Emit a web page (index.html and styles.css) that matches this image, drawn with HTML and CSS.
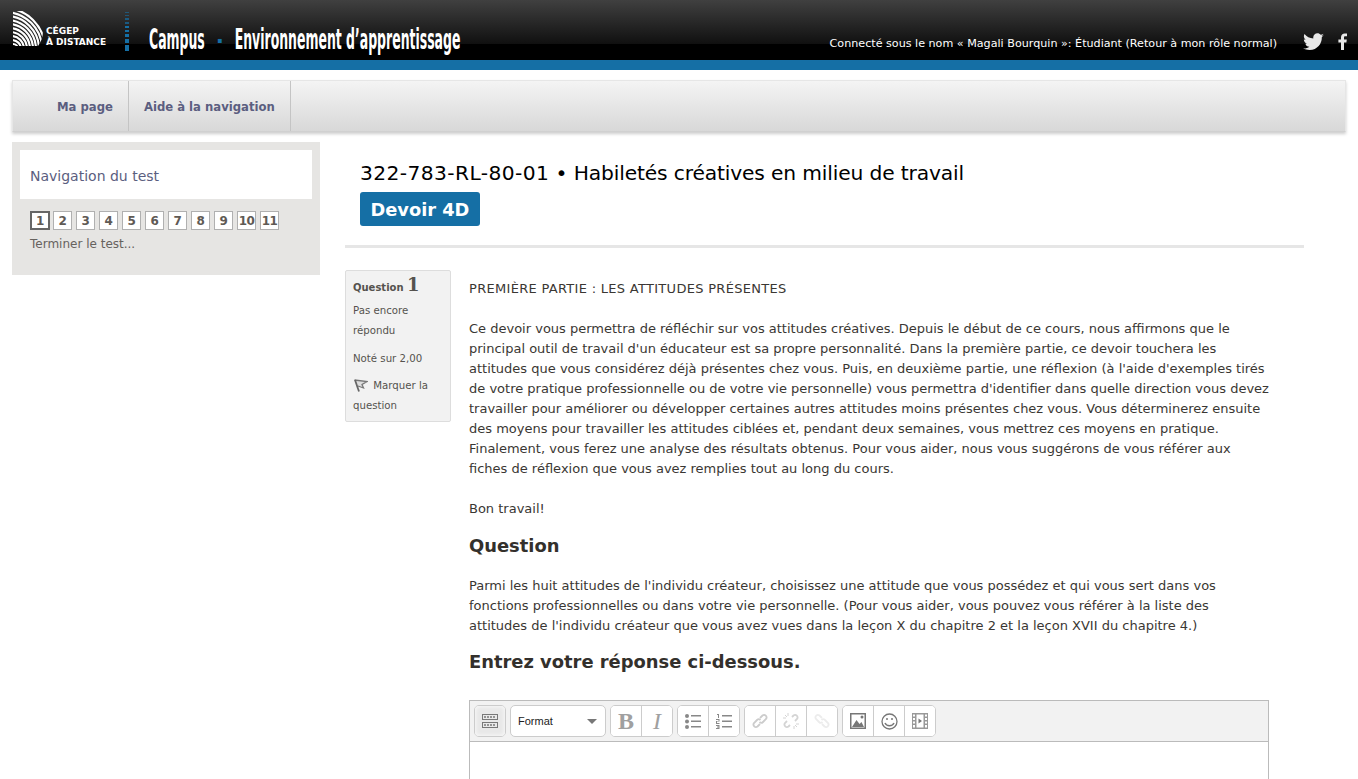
FILE: index.html
```html
<!DOCTYPE html>
<html lang="fr">
<head>
  <meta charset="UTF-8">
  <title>Devoir 4D</title>
  <link rel="stylesheet" href="styles.css">
</head>
<body>

  <header class="site-header">
    <div class="logo">
      <svg class="logo-mark" width="32" height="36" viewBox="0 0 32 36">
        <defs>
          <clipPath id="logo-clip"><path d="M1 0H16C26 3 31 11 31 20C31 26 29 31 26 35H1Z"/></clipPath>
        </defs>
        <g clip-path="url(#logo-clip)" fill="none" stroke="#fff" stroke-width="2.200">
          <circle cx="1" cy="38" r="5"/>
          <circle cx="0" cy="38" r="9"/>
          <circle cx="-1" cy="38" r="13"/>
          <circle cx="-2" cy="38" r="17"/>
          <circle cx="-3" cy="38" r="21"/>
          <circle cx="-4" cy="38" r="25"/>
          <circle cx="-5" cy="38" r="29"/>
          <circle cx="-6" cy="38" r="33"/>
          <circle cx="-7" cy="38" r="37"/>
          <circle cx="-8" cy="38" r="41"/>
        </g>
      </svg>
      <div class="logo-text">CÉGEP<br>À DISTANCE</div>
    </div>
    <div class="dots">
      <i class="d1"></i><i class="d1"></i><i class="d2"></i><i class="d2"></i><i class="d3"></i><i class="d3"></i><i class="d4"></i><i class="d5"></i><i class="d6"></i>
    </div>
    <div class="site-title">
      <span>Campus</span><span class="dash">-</span><span>Environnement d’apprentissage</span>
    </div>
    <div class="user-info">Connecté sous le nom « Magali Bourquin »: Étudiant (Retour à mon rôle normal)</div>
    <svg class="twitter" width="21" height="18" viewBox="0 0 24 20">
      <path fill="#e8e8e8" d="M24 2.4c-.9.4-1.8.7-2.8.8 1-.6 1.8-1.6 2.2-2.7-1 .6-2 1-3.1 1.2C19.300.7 18 0 16.600 0c-2.700 0-4.900 2.200-4.900 4.900 0 .4 0 .8.1 1.100C7.700 5.800 4.100 3.900 1.700.9c-.4.7-.7 1.600-.7 2.500 0 1.700.9 3.200 2.200 4.100-.8 0-1.600-.2-2.200-.6v.1c0 2.400 1.700 4.400 3.900 4.800-.4.100-.8.200-1.300.2-.3 0-.6 0-.9-.1.6 2 2.400 3.400 4.600 3.400-1.700 1.300-3.800 2.100-6.100 2.100-.4 0-.8 0-1.200-.1C2.200 18.200 4.800 19 7.500 19c9.100 0 14-7.500 14-14v-.6c1-.7 1.800-1.600 2.500-2Z"/>
    </svg>
    <svg class="facebook" width="9" height="17" viewBox="0 0 9 17">
      <path fill="#e8e8e8" d="M6 17V9.500h2.400L8.800 6.500H6V4.700c0-.9.300-1.400 1.400-1.400H9V.6C8.700.6 7.800.5 6.800.5 4.600.5 3 1.800 3 4.300v2.200H.4v3H3V17Z"/>
    </svg>
  </header>
  <div class="blue-bar"></div>

  <nav class="main-nav">
    <a class="first" href="#">Ma page</a>
    <a href="#">Aide à la navigation</a>
  </nav>

  <div class="page">
    <aside class="test-nav">
      <div class="test-nav-title">Navigation du test</div>
      <div class="pages">
        <span class="current">1</span><span>2</span><span>3</span><span>4</span><span>5</span><span>6</span><span>7</span><span>8</span><span>9</span><span>10</span><span>11</span>
      </div>
      <a class="finish" href="#">Terminer le test...</a>
    </aside>

    <main class="content">
      <div class="page-head">
        <h1><span class="course-code">322-783-RL-80-01</span> • Habiletés créatives en milieu de travail</h1>
        <div class="badge">Devoir 4D</div>
      </div>

      <div class="question">
        <div class="q-info">
          <div class="q-no">Question <b>1</b></div>
          <p>Pas encore répondu</p>
          <p>Noté sur 2,00</p>
          <p>
            <svg class="flag" width="15" height="14" viewBox="0 0 15 14">
              <path d="M1.500 2L14 3.500 9 6.500 10.500 10 5 8" fill="#ddd" stroke="#777" stroke-width="1.300"/>
              <path d="M2 2L6 13.500" fill="none" stroke="#666" stroke-width="1.800"/>
            </svg>
            Marquer la question
          </p>
        </div>

        <div class="q-body">
          <p class="caps">PREMIÈRE PARTIE : LES ATTITUDES PRÉSENTES</p>
          <br>
          <p>Ce devoir vous permettra de réfléchir sur vos attitudes créatives. Depuis le début de ce cours, nous affirmons que le principal outil de travail d'un éducateur est sa propre personnalité. Dans la première partie, ce devoir touchera les attitudes que vous considérez déjà présentes chez vous. Puis, en deuxième partie, une réflexion (à l'aide d'exemples tirés de votre pratique professionnelle ou de votre vie personnelle) vous permettra d'identifier dans quelle direction vous devez travailler pour améliorer ou développer certaines autres attitudes moins présentes chez vous. Vous déterminerez ensuite des moyens pour travailler les attitudes ciblées et, pendant deux semaines, vous mettrez ces moyens en pratique. Finalement, vous ferez une analyse des résultats obtenus. Pour vous aider, nous vous suggérons de vous référer aux fiches de réflexion que vous avez remplies tout au long du cours.</p>
          <br>
          <p>Bon travail!</p>
          <h3>Question</h3>
          <p>Parmi les huit attitudes de l'individu créateur, choisissez une attitude que vous possédez et qui vous sert dans vos fonctions professionnelles ou dans votre vie personnelle. (Pour vous aider, vous pouvez vous référer à la liste des attitudes de l'individu créateur que vous avez vues dans la leçon X du chapitre 2 et la leçon XVII du chapitre 4.)</p>
          <h3 class="answer-title">Entrez votre réponse ci-dessous.</h3>

          <div class="editor">
            <div class="toolbar">
              <div class="group"><button class="pressed">
                <svg width="16" height="14" viewBox="0 0 16 14" fill="none" stroke="#777"><rect x=".5" y=".5" width="15" height="5"/><rect x=".5" y="8.500" width="15" height="5"/><path d="M2 3h12M2 11h12" stroke-dasharray="2 1" stroke-width="1.500"/></svg>
              </button></div>
              <div class="group select"><span>Format</span><i class="caret"></i></div>
              <div class="group">
                <button class="letter bold">B</button>
                <button class="letter italic">I</button>
              </div>
              <div class="group">
                <button><svg width="16" height="15" viewBox="0 0 16 15" fill="#888"><circle cx="2" cy="2" r="2"/><circle cx="2" cy="7.500" r="2"/><circle cx="2" cy="13" r="2"/><rect x="6" y="1" width="10" height="1.500"/><rect x="6" y="6.500" width="10" height="1.500"/><rect x="6" y="12" width="10" height="1.500"/></svg></button>
                <button><svg width="16" height="15" viewBox="0 0 16 15" fill="#888"><path d="M1 0h2v4H2V1H1ZM0 5h3.500v2.500H1V9h2.500v1H0V7h2.500V6H0ZM0 11h3.500v4H0v-1h2.500v-.5H1v-1h1.500V12H0Z"/><rect x="6" y="1" width="10" height="1.500"/><rect x="6" y="6.500" width="10" height="1.500"/><rect x="6" y="12" width="10" height="1.500"/></svg></button>
              </div>
              <div class="group">
                <button><svg width="16" height="16" viewBox="0 0 16 16" fill="none" stroke="#ccc" stroke-width="1.800"><path d="M8 5l2.500-2.500a2.500 2.500 0 0 1 3.500 3.500L11 9a2.500 2.500 0 0 1-3.500 0"/><path d="M8 11l-2.500 2.500A2.500 2.500 0 0 1 2 10L5 7a2.500 2.500 0 0 1 3.500 0"/></svg></button>
                <button><svg width="16" height="16" viewBox="0 0 16 16" fill="none" stroke="#d4d4d4" stroke-width="1.800"><path d="M9 4l1.500-1.500A2.500 2.500 0 0 1 14 6l-2 2"/><path d="M7 12l-1.500 1.500A2.500 2.500 0 0 1 2 10l2-2"/><path stroke-width="1" d="M5 0v3M0 5h3M2 2l2 2M11 13v3M13 11h3M12 12l2 2"/></svg></button>
                <button><svg width="16" height="16" viewBox="0 0 16 16" fill="none" stroke="#ececec" stroke-width="1.800"><path d="M8 11l2.500 2.500A2.500 2.500 0 0 0 14 10l-3-3a2.500 2.500 0 0 0-3.500 0"/><path d="M8 5L5.500 2.500A2.500 2.500 0 0 0 2 6l3 3a2.500 2.500 0 0 0 3.500 0"/></svg></button>
              </div>
              <div class="group">
                <button><svg width="16" height="16" viewBox="0 0 16 16"><rect x=".75" y=".75" width="14.500" height="14.500" fill="none" stroke="#777" stroke-width="1.500"/><path d="M2 14l4.500-7 3 4 2-2 2.500 5Z" fill="#777"/><circle cx="12" cy="4" r="1.500" fill="#777"/></svg></button>
                <button><svg width="17" height="17" viewBox="0 0 17 17" fill="none" stroke="#777" stroke-width="1.300"><circle cx="8.500" cy="8.500" r="7.500"/><path d="M4 10c1.500 3.500 7.500 3.500 9 0" stroke-width="1.500"/><circle cx="6" cy="6" r="1" fill="#777" stroke="none"/><circle cx="11" cy="6" r="1" fill="#777" stroke="none"/></svg></button>
                <button><svg width="16" height="16" viewBox="0 0 16 16" fill="#999"><path d="M0 0h16v16H0ZM1 1.500v2h2v-2ZM1 5v2h2V5ZM1 8.500v2h2v-2ZM1 12v2.500h2V12ZM13 1.500v2h2v-2ZM13 5v2h2V5ZM13 8.500v2h2v-2ZM13 12v2.500h2V12ZM4.500 1.500v13h7v-13Z" fill-rule="evenodd"/><path d="M6.500 5.500l3.500 2.500-3.500 2.500Z" fill="#777"/></svg></button>
              </div>
            </div>
            <div class="editor-area"></div>
          </div>
        </div>
      </div>
    </main>
  </div>

</body>
</html>
```

FILE: styles.css
```css
:root {
  --blue: #156fa5;
  --text: #3a3733;
  --nav-text: #5b5e80;
}

html, body {
  height: 100%;
  overflow: hidden;
}

body {
  margin: 0;
  background: #fff;
  color: var(--text);
  font-family: "DejaVu Sans", Verdana, sans-serif;
  font-size: 13px;
  line-height: 20px;
}

p {
  margin: 0;
}

/* Header */
.site-header {
  display: flex;
  align-items: flex-start;
  height: 60px;
  background: linear-gradient(#404040 0, #101010 44px, #000 44px);
  color: #fff;
}

.logo {
  display: flex;
  align-items: flex-end;
  margin: 11px 0 0 12px;
  width: 113px;
}

.logo-mark {
  flex: none;
}

.logo-text {
  margin: 0 0 -1px 2px;
  font-size: 9px;
  line-height: 11px;
  font-weight: bold;
  white-space: nowrap;
}

.dots {
  display: flex;
  flex-direction: column;
  align-items: center;
  width: 4px;
  margin-top: 12px;
  gap: 2px;
}

.dots i {
  display: block;
  width: 4px;
  background: var(--blue);
}

.dots .d1 { height: 1px; opacity: 0.6; }
.dots .d2 { height: 2px; opacity: 0.7; }
.dots .d3 { height: 2px; }
.dots .d4 { height: 3px; }
.dots .d5 { height: 4px; }
.dots .d6 { height: 6px; }

.site-title {
  display: flex;
  margin: 25px 0 0 20px;
  width: 320px;
  font-family: "Liberation Sans Narrow", "DejaVu Sans Condensed", sans-serif;
  font-weight: bold;
  font-size: 28px;
  line-height: 30px;
  white-space: nowrap;
  transform: scaleX(0.495);
  transform-origin: left;
}

.site-title .dash {
  margin: 0 25px;
  color: var(--blue);
}

.user-info {
  margin: 33px 0 0 auto;
  font-size: 11.150px;
  line-height: 21px;
  white-space: nowrap;
}

.twitter {
  flex: none;
  margin: 33px 0 0 26px;
}

.facebook {
  flex: none;
  margin: 33px 11px 0 14px;
}

.blue-bar {
  height: 10px;
  background: var(--blue);
}

/* Nav bar */
.main-nav {
  display: flex;
  height: 50px;
  margin: 10px 12px;
  padding-left: 29px;
  border: 1px solid #e6e6e6;
  border-bottom-color: #d0d0d0;
  background: linear-gradient(#f4f4f4, #d8d8d8);
  box-shadow: 0 2px 3px rgba(0, 0, 0, 0.2);
}

.main-nav a {
  padding: 0 15px;
  border-right: 1px solid #c4c4c4;
  color: var(--nav-text);
  font-size: 11.650px;
  font-weight: bold;
  line-height: 52px;
  text-decoration: none;
}

/* Page columns */
.page {
  display: grid;
  grid-template-columns: 308px 959px;
  column-gap: 25px;
  margin-left: 12px;
}

.test-nav {
  align-self: start;
  height: 133px;
  padding: 8px;
  box-sizing: border-box;
  background: #e6e5e3;
}

.test-nav-title {
  height: 49px;
  padding-left: 10px;
  background: #fff;
  color: var(--nav-text);
  font-size: 14px;
  line-height: 52px;
}

.pages {
  display: flex;
  gap: 4px;
  margin: 12px 0 0 10px;
}

.pages span {
  box-sizing: border-box;
  width: 19px;
  height: 19px;
  border: 1px solid #b0b0b0;
  background: #fff;
  color: #5f5a55;
  font-size: 12px;
  font-weight: bold;
  line-height: 18px;
  text-align: center;
  letter-spacing: -0.5px;
}

.pages .current {
  width: 20px;
  margin-right: -1px;
  border: 2px solid #666;
  line-height: 16px;
}

.finish {
  display: block;
  margin: 4px 0 0 10px;
  color: #66625e;
  font-size: 12px;
  text-decoration: none;
}

/* Main column */
.page-head {
  padding: 20px 15px 19px;
  border-bottom: 3px solid #e6e6e6;
}

h1 {
  margin: 0;
  color: #000;
  font-size: 20.240px;
  font-weight: normal;
  line-height: 22px;
  letter-spacing: -0.15px;
}

.course-code {
  letter-spacing: 0.4px;
}

.badge {
  display: inline-block;
  margin-top: 8px;
  padding: 1px 10.500px 0;
  border-radius: 3px;
  background: var(--blue);
  color: #fff;
  font-size: 17.800px;
  font-weight: bold;
  line-height: 33px;
}

.question {
  display: flex;
  align-items: flex-start;
  margin-top: 22px;
}

.q-info {
  flex: none;
  box-sizing: border-box;
  width: 106px;
  height: 152px;
  padding: 3px 7px;
  border: 1px solid #ddd;
  border-radius: 2px;
  background: #f2f2f2;
  color: #55524e;
  font-size: 10.200px;
}

.q-no {
  font-size: 10px;
  font-weight: bold;
  line-height: 22px;
}

.q-no b {
  font-family: "DejaVu Serif", serif;
  font-size: 18px;
  font-weight: bold;
}

.q-info p {
  margin-bottom: 7px;
}

.q-info p:first-of-type {
  margin: 2px 0 8px;
}

.flag {
  margin-right: 2px;
  vertical-align: -3px;
}

.q-body {
  width: 800px;
  margin: 9px 0 0 18px;
}

.caps {
  letter-spacing: 0.3px;
}

h3 {
  margin: 16px 0 19px;
  color: #33302c;
  font-size: 17.900px;
  font-weight: bold;
  line-height: 22px;
}

.answer-title {
  margin: 15px 0 27px;
}

/* Editor */
.editor {
  border: 1px solid #bbb;
  border-bottom: 0;
}

.toolbar {
  display: flex;
  gap: 4px;
  height: 32px;
  padding: 4px;
  border-bottom: 1px solid #bbb;
  background: #f2f2f2;
}

.group {
  display: flex;
  border: 1px solid #ccc;
  border-radius: 5px;
  background: #fff;
  overflow: hidden;
}

.group button {
  display: flex;
  align-items: center;
  justify-content: center;
  box-sizing: border-box;
  width: 31px;
  height: 30px;
  padding: 0;
  border: 0;
  border-left: 1px solid #ccc;
  background: #fff;
}

.group button:first-child {
  width: 30px;
  border-left: 0;
}

.group button.pressed {
  background: #e8e8e8;
  box-shadow: inset 0 0 5px #fff;
}

.group .letter {
  color: #a0a0a0;
  font-family: "Liberation Serif", serif;
  font-size: 24px;
}

.letter.bold { font-weight: bold; }
.letter.italic { font-style: italic; }

.select {
  display: flex;
  align-items: center;
  justify-content: space-between;
  width: 79px;
  padding: 0 8px 0 7px;
  color: #222;
  font-family: "Liberation Sans", Arial, sans-serif;
  font-size: 11px;
}

.caret {
  width: 0;
  height: 0;
  border-left: 5px solid transparent;
  border-right: 5px solid transparent;
  border-top: 5px solid #777;
}

.editor-area {
  height: 37px;
  background: #fff;
}
```
